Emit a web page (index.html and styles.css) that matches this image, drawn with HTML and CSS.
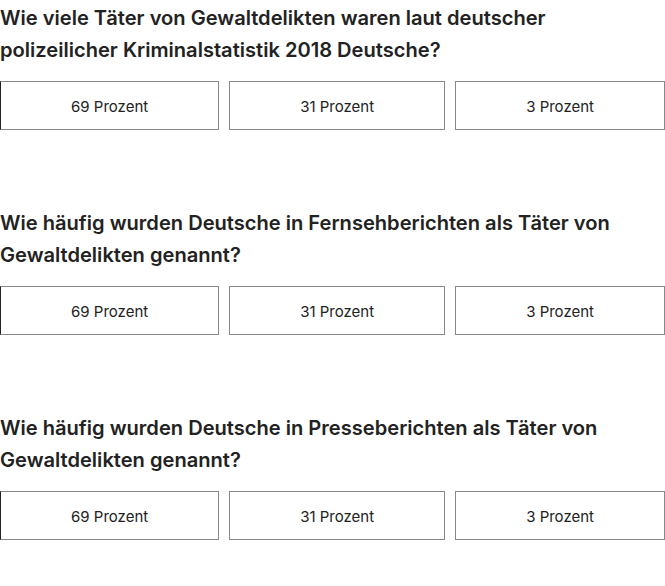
FILE: index.html
```html
<!DOCTYPE html>
<html lang="de">
<head>
<meta charset="utf-8">
<link rel="stylesheet" href="styles.css">
</head>
<body>
<div class="quiz">
  <section class="block">
    <h2 class="question">Wie viele Täter von Gewaltdelikten waren laut deutscher polizeilicher Kriminalstatistik 2018 Deutsche?</h2>
    <div class="options">
      <button class="opt">69 Prozent</button>
      <button class="opt">31 Prozent</button>
      <button class="opt">3 Prozent</button>
    </div>
  </section>
  <section class="block">
    <h2 class="question">Wie häufig wurden Deutsche in Fernsehberichten als Täter von Gewaltdelikten genannt?</h2>
    <div class="options">
      <button class="opt">69 Prozent</button>
      <button class="opt">31 Prozent</button>
      <button class="opt">3 Prozent</button>
    </div>
  </section>
  <section class="block">
    <h2 class="question">Wie häufig wurden Deutsche in Presseberichten als Täter von Gewaltdelikten genannt?</h2>
    <div class="options">
      <button class="opt">69 Prozent</button>
      <button class="opt">31 Prozent</button>
      <button class="opt">3 Prozent</button>
    </div>
  </section>
</div>
</body>
</html>
```
FILE: styles.css
```css
html, body {
  margin: 0;
  padding: 0;
  background: #fff;
}
body {
  font-family: Inter, "Liberation Sans", sans-serif;
  color: #222;
}
.quiz {
  padding-top: 2px;
  display: flex;
  flex-direction: column;
  gap: 77px;
}
.question {
  margin: 0 0 15px;
  max-width: 620px;
  font-size: 20.1px;
  line-height: 32px;
  font-weight: 600;
  color: #222;
  letter-spacing: 0;
}
.options {
  display: flex;
  gap: 10px;
}
.opt {
  flex: 1 1 auto;
  height: 49px;
  margin: 0;
  padding: 1px 10px 0;
  background: #fff;
  border: 1px solid #888;
  border-radius: 0;
  font-family: Inter, "Liberation Sans", sans-serif;
  font-size: 15px;
  color: #222;
  text-align: center;
}
.options .opt:first-child {
  border-left-color: #222;
}
```
